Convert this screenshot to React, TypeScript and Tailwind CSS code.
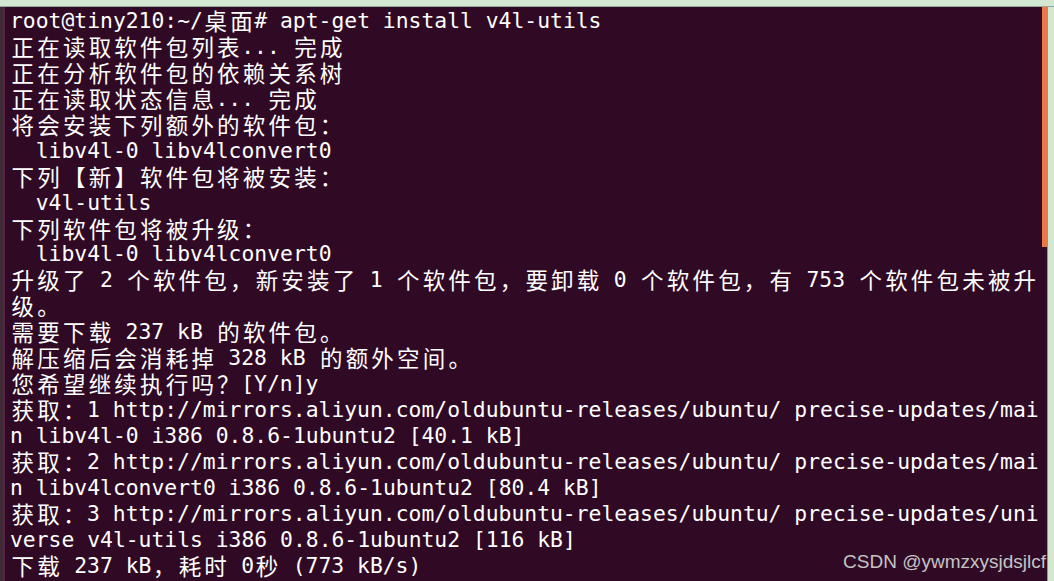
const lines = [
  "root@tiny210:~/桌面# apt-get install v4l-utils",
  "正在读取软件包列表... 完成",
  "正在分析软件包的依赖关系树",
  "正在读取状态信息... 完成",
  "将会安装下列额外的软件包：",
  "  libv4l-0 libv4lconvert0",
  "下列【新】软件包将被安装：",
  "  v4l-utils",
  "下列软件包将被升级：",
  "  libv4l-0 libv4lconvert0",
  "升级了 2 个软件包，新安装了 1 个软件包，要卸载 0 个软件包，有 753 个软件包未被升",
  "级。",
  "需要下载 237 kB 的软件包。",
  "解压缩后会消耗掉 328 kB 的额外空间。",
  "您希望继续执行吗？[Y/n]y",
  "获取：1 http://mirrors.aliyun.com/oldubuntu-releases/ubuntu/ precise-updates/mai",
  "n libv4l-0 i386 0.8.6-1ubuntu2 [40.1 kB]",
  "获取：2 http://mirrors.aliyun.com/oldubuntu-releases/ubuntu/ precise-updates/mai",
  "n libv4lconvert0 i386 0.8.6-1ubuntu2 [80.4 kB]",
  "获取：3 http://mirrors.aliyun.com/oldubuntu-releases/ubuntu/ precise-updates/uni",
  "verse v4l-utils i386 0.8.6-1ubuntu2 [116 kB]",
  "下载 237 kB，耗时 0秒 (773 kB/s)",
];

const isWide = (ch: string) => /[\u2E80-\uFFEF]/.test(ch);

// terminal cells: ascii = 1 col, CJK / full-width = 2 cols
const TermLine = ({ text }: { text: string }) => (
  <div className="h-[25.95px] whitespace-pre">
    {Array.from(text).map((ch, i) =>
      isWide(ch) ? (
        <span
          key={i}
          className="inline-block align-top h-[25.95px] w-[25.7px] text-center text-[22.5px] leading-[25.95px] font-['Noto_Sans_CJK_SC',sans-serif]"
        >
          {ch}
        </span>
      ) : (
        <span key={i}>{ch}</span>
      )
    )}
  </div>
);

const App = () => (
  <div className="relative w-[1054px] h-[581px] flex flex-col bg-[#d3e8d1] overflow-hidden">
    <div className="h-[6px] shrink-0" />
    <div className="h-px shrink-0 bg-[#9aa89a]" />
    <div className="flex flex-1 min-h-0">
      <div className="w-[3px] bg-[#3e2a35]" />
      <div className="w-[2px] bg-[#5a1f45]" />
      <div className="flex-1 bg-[#300a24] pl-[5px] pt-px text-white text-[21.35px] leading-[25.95px] font-['DejaVu_Sans_Mono','Noto_Sans_CJK_SC',monospace] overflow-hidden">
        {lines.map((l, i) => (
          <TermLine key={i} text={l} />
        ))}
      </div>
      <div className="w-[5px] flex flex-col bg-[#300a24]">
        <div className="h-[240px] bg-[#e9784b]" />
      </div>
      <div className="w-px bg-[#8d9a8d]" />
      <div className="w-[6px]" />
    </div>
    <div className="absolute right-[8px] top-[552px] text-[19px] leading-none text-[#c4c4c4] font-['Liberation_Sans',Arial,sans-serif]">
      CSDN @ywmzxysjdsjlcf
    </div>
  </div>
);

export default App;
